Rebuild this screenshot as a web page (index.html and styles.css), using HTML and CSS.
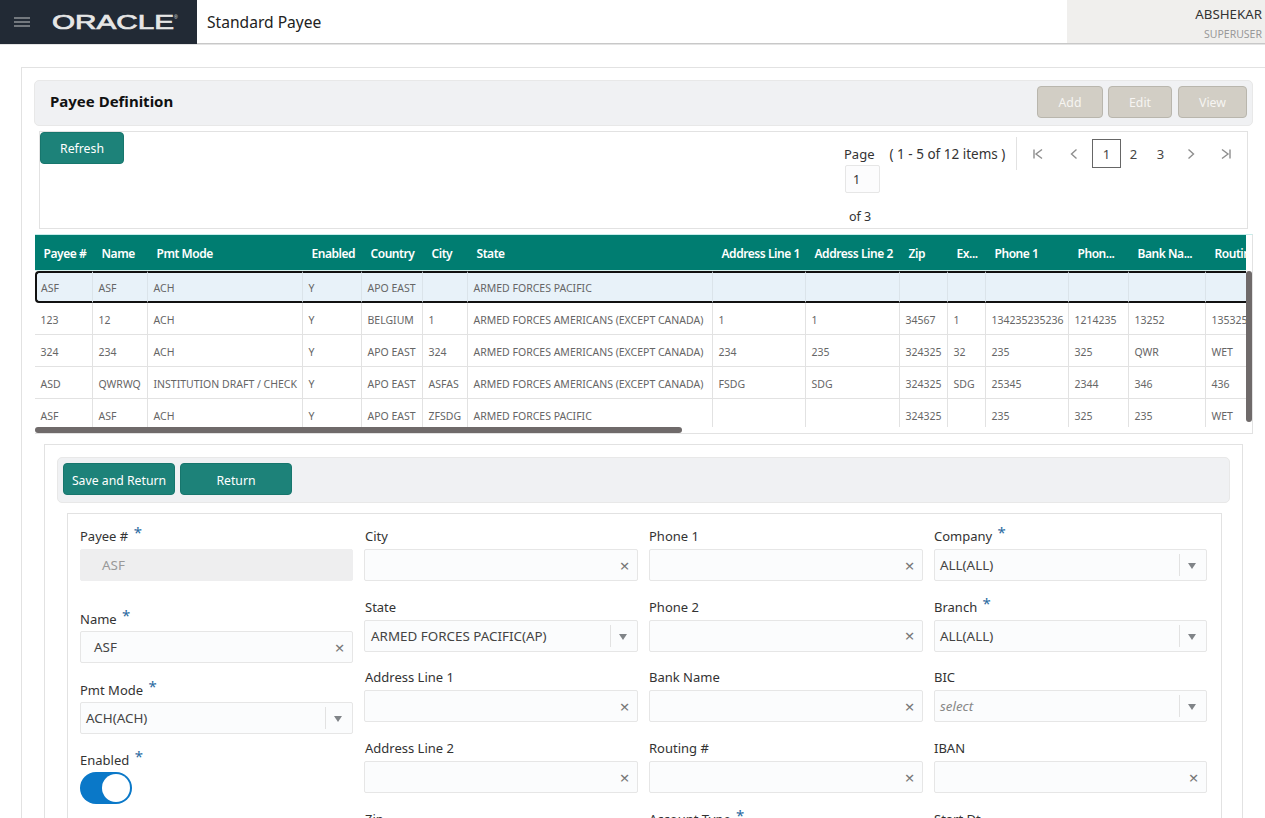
FILE: index.html
```html
<!DOCTYPE html>
<html lang="en">
<head>
<meta charset="utf-8">
<title>Standard Payee</title>
<link rel="stylesheet" href="styles.css">
</head>
<body>
<header class="topbar">
  <div class="brand">
    <svg class="burger" width="16" height="10" viewBox="0 0 16 10"><path d="M0 1h16M0 5h16M0 9h16" stroke="#8f9296" stroke-width="1.6"/></svg>
    <svg class="logo" width="128" height="24" viewBox="0 0 128 24"><text x="0" y="18.500" textLength="122" lengthAdjust="spacingAndGlyphs" class="logo-text">ORACLE</text><text x="122" y="9" class="logo-mark">®</text></svg>
  </div>
  <div class="page-title">Standard Payee</div>
  <div class="user"><div class="user-name">ABSHEKAR</div><div class="user-role">SUPERUSER</div></div>
</header>
<main class="shell">
  <section class="title-bar">
    <h1>Payee Definition</h1>
    <div class="actions">
      <button class="btn-off btn-add">Add</button>
      <button class="btn-off btn-edit">Edit</button>
      <button class="btn-off btn-view">View</button>
    </div>
  </section>
  <section class="toolbar">
    <button class="btn btn-refresh">Refresh</button>
    <div class="pager">
      <div class="pager-info">
        <div class="pager-line"><span>Page</span><span class="pager-items">( 1 - 5 of 12 items )</span></div>
        <div class="page-input">1</div>
        <div class="page-of">of 3</div>
      </div>
      <nav class="pager-nav">
        <svg class="nav-first" width="12" height="12" viewBox="0 0 12 12"><path d="M2 1.500v9M10 1.500 4 6l6 4.500" class="nav-stroke"/></svg>
        <svg class="nav-prev" width="12" height="12" viewBox="0 0 12 12"><path d="M8.500 1.500 3.500 6l5 4.500" class="nav-stroke"/></svg>
        <span class="page-cur">1</span>
        <span class="page-num">2</span>
        <span class="page-num">3</span>
        <svg class="nav-next" width="12" height="12" viewBox="0 0 12 12"><path d="M3.500 1.500 8.500 6l-5 4.500" class="nav-stroke"/></svg>
        <svg class="nav-last" width="12" height="12" viewBox="0 0 12 12"><path d="M10 1.500v9M2 1.500 8 6l-6 4.500" class="nav-stroke"/></svg>
      </nav>
    </div>
  </section>
  <section class="grid-wrap">
    <div class="grid-view">
      <table class="grid">
        <colgroup>
          <col class="c1"><col class="c2"><col class="c3"><col class="c4"><col class="c5"><col class="c6"><col class="c7"><col class="c8"><col class="c9"><col class="c10"><col class="c11"><col class="c12"><col class="c13"><col class="c14"><col class="c15">
        </colgroup>
        <thead>
          <tr><th>Payee #</th><th>Name</th><th>Pmt Mode</th><th>Enabled</th><th>Country</th><th>City</th><th>State</th><th>Address Line 1</th><th>Address Line 2</th><th>Zip</th><th>Ex...</th><th>Phone 1</th><th>Phon...</th><th>Bank Na...</th><th>Routing #</th></tr>
        </thead>
        <tbody>
          <tr class="sel"><td>ASF</td><td>ASF</td><td>ACH</td><td>Y</td><td>APO EAST</td><td></td><td>ARMED FORCES PACIFIC</td><td></td><td></td><td></td><td></td><td></td><td></td><td></td><td></td></tr>
          <tr><td>123</td><td>12</td><td>ACH</td><td>Y</td><td>BELGIUM</td><td>1</td><td>ARMED FORCES AMERICANS (EXCEPT CANADA)</td><td>1</td><td>1</td><td>34567</td><td>1</td><td>134235235236</td><td>1214235</td><td>13252</td><td>135325</td></tr>
          <tr><td>324</td><td>234</td><td>ACH</td><td>Y</td><td>APO EAST</td><td>324</td><td>ARMED FORCES AMERICANS (EXCEPT CANADA)</td><td>234</td><td>235</td><td>324325</td><td>32</td><td>235</td><td>325</td><td>QWR</td><td>WET</td></tr>
          <tr><td>ASD</td><td>QWRWQ</td><td>INSTITUTION DRAFT / CHECK</td><td>Y</td><td>APO EAST</td><td>ASFAS</td><td>ARMED FORCES AMERICANS (EXCEPT CANADA)</td><td>FSDG</td><td>SDG</td><td>324325</td><td>SDG</td><td>25345</td><td>2344</td><td>346</td><td>436</td></tr>
          <tr><td>ASF</td><td>ASF</td><td>ACH</td><td>Y</td><td>APO EAST</td><td>ZFSDG</td><td>ARMED FORCES PACIFIC</td><td></td><td></td><td>324325</td><td></td><td>235</td><td>325</td><td>235</td><td>WET</td></tr>
        </tbody>
      </table>
    </div>
    <div class="thumb-h"></div>
    <div class="thumb-v"></div>
  </section>
  <section class="detail">
    <div class="detail-bar">
      <button class="btn btn-save">Save and Return</button>
      <button class="btn btn-return">Return</button>
    </div>
    <div class="form-card">
      <div class="form-col">
        <div class="field field-first"><label>Payee # <sup>*</sup></label><div class="control is-disabled"><span class="val">ASF</span></div></div>
        <div class="field"><label>Name <sup>*</sup></label><div class="control"><span class="val">ASF</span><span class="clear">×</span></div></div>
        <div class="field"><label>Pmt Mode <sup>*</sup></label><div class="control select"><span class="val">ACH(ACH)</span><span class="caret"></span></div></div>
        <div class="field"><label>Enabled <sup>*</sup></label><div class="switch"><span class="knob"></span></div></div>
      </div>
      <div class="form-col">
        <div class="field"><label>City</label><div class="control"><span class="val"></span><span class="clear">×</span></div></div>
        <div class="field"><label>State</label><div class="control select"><span class="val">ARMED FORCES PACIFIC(AP)</span><span class="caret"></span></div></div>
        <div class="field"><label>Address Line 1</label><div class="control"><span class="val"></span><span class="clear">×</span></div></div>
        <div class="field"><label>Address Line 2</label><div class="control"><span class="val"></span><span class="clear">×</span></div></div>
        <div class="field"><label>Zip</label></div>
      </div>
      <div class="form-col">
        <div class="field"><label>Phone 1</label><div class="control"><span class="val"></span><span class="clear">×</span></div></div>
        <div class="field"><label>Phone 2</label><div class="control"><span class="val"></span><span class="clear">×</span></div></div>
        <div class="field"><label>Bank Name</label><div class="control"><span class="val"></span><span class="clear">×</span></div></div>
        <div class="field"><label>Routing #</label><div class="control"><span class="val"></span><span class="clear">×</span></div></div>
        <div class="field"><label>Account Type <sup>*</sup></label></div>
      </div>
      <div class="form-col">
        <div class="field"><label>Company <sup>*</sup></label><div class="control select"><span class="val">ALL(ALL)</span><span class="caret"></span></div></div>
        <div class="field"><label>Branch <sup>*</sup></label><div class="control select"><span class="val">ALL(ALL)</span><span class="caret"></span></div></div>
        <div class="field"><label>BIC</label><div class="control select"><span class="val placeholder">select</span><span class="caret"></span></div></div>
        <div class="field"><label>IBAN</label><div class="control"><span class="val"></span><span class="clear">×</span></div></div>
        <div class="field"><label>Start Dt</label></div>
      </div>
    </div>
  </section>
</main>
</body>
</html>
```
FILE: styles.css
```css
* { box-sizing: border-box; }
html, body { margin: 0; height: 818px; overflow: hidden; background: #fff; }
body { font-family: "Noto Sans", "Open Sans", sans-serif; font-size: 13px; color: #333; }
button { font-family: inherit; cursor: default; }

.topbar { display: flex; height: 44px; border-bottom: 1px solid #c8c8c8; box-shadow: 0 1px 0 #e4e4e4; }
.brand { width: 197px; height: 44px; background: #222a35; display: flex; align-items: center; padding-left: 14px; gap: 22px; }
.logo { overflow: visible; }
.logo-text { font-family: "Liberation Sans", sans-serif; font-weight: 400; font-size: 20px; fill: #e6e6e6; stroke: #e6e6e6; stroke-width: 0.700px; }
.logo-mark { font-family: "Liberation Sans", sans-serif; font-size: 5px; fill: #e4e4e4; }
.page-title { flex: 1; padding: 11px 0 0 10px; font-size: 15.600px; line-height: 22px; color: #222; }
.user { width: 198px; height: 43px; background: #f0efed; text-align: right; padding-right: 3px; }
.user-name { font-size: 13.300px; line-height: 16px; padding-top: 6px; height: 27px; color: #333; }
.user-role { font-size: 10.500px; line-height: 14px; color: #999; }

.shell { margin: 23px 0 0 21px; border: 1px solid #e2e2e2; border-right: 0; padding: 12px 12px 0 12px; height: 760px; }
.title-bar { display: flex; justify-content: space-between; align-items: center; width: 1219px; height: 46px; background: #f0f1f3; border: 1px solid #e8e8e8; border-radius: 5px; padding: 0 5px 0 15px; }
.title-bar h1 { margin: 0 0 4px; font-size: 15px; font-weight: 700; color: #111; }
.actions { display: flex; gap: 5px; margin-bottom: 2px; }
.btn-off { height: 32px; background: #d2cec5; border: 1px solid #b9b6ad; border-radius: 4px; color: #f6f5f2; font-size: 12.300px; padding: 0; }
.btn-add { width: 66px; }
.btn-edit { width: 64px; }
.btn-view { width: 69px; margin-left: 1px; }

.btn { height: 32px; background: #1d8279; border: 1px solid #17766d; border-radius: 4px; color: #fff; font-size: 12.250px; padding: 0; }

.toolbar { display: flex; justify-content: space-between; margin: 5px 0 0 5px; width: 1209px; height: 98px; border: 1px solid #e2e2e2; }
.btn-refresh { width: 84px; }
.pager { display: flex; align-items: flex-start; padding: 5px 15px 0 0; }
.pager-info { width: 173px; }
.pager-line { display: flex; gap: 15px; height: 28px; padding-top: 6px; align-items: center; font-size: 13px; line-height: 18px; color: #333; }
.pager-items { font-size: 13.500px; }
.page-input { width: 35px; height: 28px; margin-left: 1px; border: 1px solid #e6e6e6; border-radius: 2px; background: #fcfcfd; padding-left: 7px; line-height: 28px; font-size: 12.500px; }
.page-of { margin: 14px 0 0 5px; line-height: 20px; font-size: 12.500px; }
.pager-nav { display: flex; align-items: center; height: 33px; border-left: 1px solid #e2e2e2; margin-left: -1px; padding-left: 15px; color: #444; font-size: 13px; }
.nav-stroke { fill: none; stroke: #8e8e8e; stroke-width: 1.400; }
.nav-prev { margin-left: 24px; }
.page-cur { width: 29px; height: 29px; border: 1px solid #666; margin: 0 -1px 0 12px; display: flex; align-items: center; justify-content: center; }
.page-num { width: 27px; text-align: center; }
.nav-next { margin-left: 11px; }
.nav-last { margin-left: 23px; }

.grid-wrap { position: relative; margin: 5px 0 0 1px; width: 1218px; height: 200px; border: 1px solid #e2e2e2; border-top-color: #c6ecea; border-left: 0; }
.grid-view { width: 1211px; height: 192px; overflow: hidden; }
.grid { table-layout: fixed; width: 1223px; border-collapse: separate; border-spacing: 0; font-size: 10.500px; color: #666; }
.c1 { width: 58px; } .c2 { width: 55px; } .c3 { width: 155px; } .c4 { width: 59px; } .c5 { width: 61px; }
.c6 { width: 45px; } .c7 { width: 245px; } .c8 { width: 93px; } .c9 { width: 94px; } .c10 { width: 48px; }
.c11 { width: 38px; } .c12 { width: 83px; } .c13 { width: 60px; } .c14 { width: 77px; } .c15 { width: 92px; }
.grid th { height: 36px; background: #007d71; color: #fff; font-size: 12px; font-weight: 600; text-align: left; padding: 2px 0 0 8.500px; white-space: nowrap; overflow: hidden; letter-spacing: -0.450px; border-bottom: 1px solid #d5f0ec; }
.grid td { height: 32px; padding: 2px 0 0 5.500px; white-space: nowrap; overflow: hidden; border-right: 1px solid #e2e2e2; border-bottom: 1px solid #e2e2e2; }
.sel td { background: #e8f2f9; border-top: 2px solid #111; border-bottom: 2px solid #111; border-right-color: #dbe4ea; }
.sel td:first-child { border-left: 2px solid #111; border-radius: 4px 0 0 4px; padding-left: 4px; }
.thumb-h { position: absolute; left: 0; bottom: 0; width: 647px; height: 6px; border-radius: 3px; background: #6f6a6a; }
.thumb-v { position: absolute; right: 0; top: 36px; width: 6px; height: 151px; border-radius: 3px; background: #6f6a6a; }

.detail { margin: 10px 0 0 10px; width: 1199px; height: 400px; border: 1px solid #e2e2e2; padding: 12px 12px 0 12px; }
.detail-bar { display: flex; gap: 5px; height: 46px; width: 1173px; background: #f0f1f3; border: 1px solid #e8e8e8; border-radius: 5px; padding: 5px; }
.btn-save, .btn-return { width: 112px; padding-top: 2px; }
.form-card { display: grid; grid-template-columns: 273px 274px 274px 273px; column-gap: 11px; margin: 10px 0 0 10px; width: 1155px; height: 320px; border: 1px solid #e2e2e2; border-bottom: 0; padding: 12px 14px 0 12px; overflow: hidden; }
.field { height: 70.700px; }
.field-first { height: 82px; }
.field label { display: block; height: 23px; line-height: 20px; font-size: 13px; color: #333; }
.form-col:nth-child(2) label { padding-left: 1px; }
.form-col:nth-child(2) .select { padding-left: 6px; }
.form-col:nth-child(1) .field + .field label { line-height: 22px; }
.field sup { color: #2c6a9f; font-size: 15px; line-height: 0; margin-left: 2px; vertical-align: 3px; }
.control { display: flex; align-items: center; height: 32px; background: #fbfcfd; border: 1px solid #e6e6e6; border-radius: 2px; padding-left: 5px; font-size: 13.400px; color: #444; }
.val { flex: 1; }
.field-first .val, .field:nth-child(2) > .control:not(.select) .val { padding-left: 8px; }
.is-disabled { background: #eeeeef; border-color: #eeeeef; color: #999; }
.is-disabled .val { padding-left: 16px !important; }
.clear { width: 25px; text-align: center; color: #777; font-size: 17px; line-height: 1; }
.caret { width: 27px; height: 22px; border-left: 1px solid #e2e2e2; position: relative; }
.caret::after { content: ""; position: absolute; left: 8px; top: 9px; border: 4.500px solid transparent; border-top: 6px solid #808488; border-bottom: 0; }
.placeholder { font-style: italic; color: #888; }
.switch { width: 52px; height: 32px; border-radius: 16px; background: #0a78c8; position: relative; }
.knob { position: absolute; right: 2px; top: 2px; width: 28px; height: 28px; border-radius: 50%; background: #fff; }
```
